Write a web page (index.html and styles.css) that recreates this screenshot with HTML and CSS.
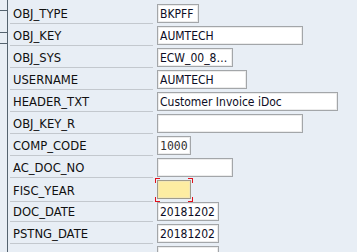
FILE: index.html
```html
<!DOCTYPE html>
<html>
<head>
    <meta name="viewport" content="width=device-width, initial-scale=1.0">
    <link rel="stylesheet" href="styles.css">
</head>
<body>

<div class="screen">
    <div class="gutter">
        <span class="tick tick-1"></span>
        <span class="tick tick-2"></span>
        <span class="tick tick-3"></span>
    </div>

    <div class="fields">
        <div class="row">
            <label class="lbl">OBJ_TYPE</label>
            <div class="cell"><span class="box w-type">BKPFF</span></div>
        </div>
        <div class="row">
            <label class="lbl">OBJ_KEY</label>
            <div class="cell"><span class="box w-key">AUMTECH</span></div>
        </div>
        <div class="row">
            <label class="lbl">OBJ_SYS</label>
            <div class="cell"><span class="box w-sys">ECW_00_8…</span></div>
        </div>
        <div class="row">
            <label class="lbl">USERNAME</label>
            <div class="cell"><span class="box w-user">AUMTECH</span></div>
        </div>
        <div class="row">
            <label class="lbl">HEADER_TXT</label>
            <div class="cell"><span class="box w-text">Customer Invoice iDoc</span></div>
        </div>
        <div class="row">
            <label class="lbl">OBJ_KEY_R</label>
            <div class="cell"><span class="box w-key"></span></div>
        </div>
        <div class="row">
            <label class="lbl">COMP_CODE</label>
            <div class="cell"><span class="box w-code mono">1000</span></div>
        </div>
        <div class="row">
            <label class="lbl">AC_DOC_NO</label>
            <div class="cell"><span class="box w-sys"></span></div>
        </div>
        <div class="row">
            <label class="lbl">FISC_YEAR</label>
            <div class="cell">
                <span class="focus">
                    <span class="box w-code active"></span>
                    <i class="corner tl"></i><i class="corner tr"></i>
                    <i class="corner bl"></i><i class="corner br"></i>
                </span>
            </div>
        </div>
        <div class="row">
            <label class="lbl">DOC_DATE</label>
            <div class="cell"><span class="box w-date">20181202</span></div>
        </div>
        <div class="row">
            <label class="lbl">PSTNG_DATE</label>
            <div class="cell"><span class="box w-date">20181202</span></div>
        </div>
        <div class="row">
            <label class="lbl"></label>
            <div class="cell"><span class="box w-date"></span></div>
        </div>
    </div>
</div>

</body>
</html>
```

FILE: styles.css
```css
* {
    box-sizing: border-box;
}

html, body {
    margin: 0;
    height: 100%;
    overflow: hidden;
}

body {
    background-color: #e8eef5;
    font-family: "DejaVu Sans", sans-serif;
    font-size: 12px;
    color: #101010;
}

.screen {
    display: flex;
    height: 100%;
}

.gutter {
    width: 8px;
    flex-shrink: 0;
    border-right: 1px solid #55636f;
    display: flex;
    flex-direction: column;
}

.tick {
    display: block;
    height: 1px;
    background-color: #55636f;
}

.tick-1 { margin-top: 10px; }
.tick-2 { margin-top: 21px; }
.tick-3 { margin-top: 10px; }

.fields {
    padding: 2px 0 0 2px;
}

.row {
    display: grid;
    grid-template-columns: 143px auto;
    column-gap: 4px;
    height: 22px;
}

.lbl {
    display: flex;
    align-items: center;
    padding: 2px 0 0 3px;
    border-bottom: 1px solid #c3c8ce;
    font-size: 11.6px;
}

.cell {
    padding-top: 2px;
}

.box {
    display: block;
    height: 19px;
    padding: 1px 0 0 2px;
    background-color: #ffffff;
    border: 1px solid #a3a6a9;
    box-shadow: inset 0 0 0 1px #ececec;
    font-family: "DejaVu Sans Condensed", "DejaVu Sans", sans-serif;
    font-size: 12px;
    line-height: 16px;
    color: #0c0c24;
    white-space: nowrap;
    overflow: hidden;
}

.mono {
    font-family: "DejaVu Sans Mono", monospace;
    font-size: 11.5px;
    color: #333333;
}

.w-type { width: 42px; }
.w-key { width: 146px; }
.w-sys { width: 76px; }
.w-user { width: 90px; }
.w-text { width: 181px; }
.w-code { width: 34px; }
.w-date { width: 62px; }

.box.active {
    background-color: #fdeda2;
    box-shadow: inset 0 0 0 1px #f3e7b3;
    border-color: #a09c8c;
}

.focus {
    position: relative;
    display: inline-block;
}

.corner {
    position: absolute;
    width: 5px;
    height: 5px;
    border: 0 solid #e3101b;
}

.corner.tl { left: -2px; top: -2px; border-left-width: 1px; border-top-width: 1px; }
.corner.tr { right: -2px; top: -2px; border-right-width: 1px; border-top-width: 1px; }
.corner.bl { left: -2px; bottom: -3px; border-left-width: 1px; border-bottom-width: 1px; }
.corner.br { right: -2px; bottom: -3px; border-right-width: 1px; border-bottom-width: 1px; }
```
